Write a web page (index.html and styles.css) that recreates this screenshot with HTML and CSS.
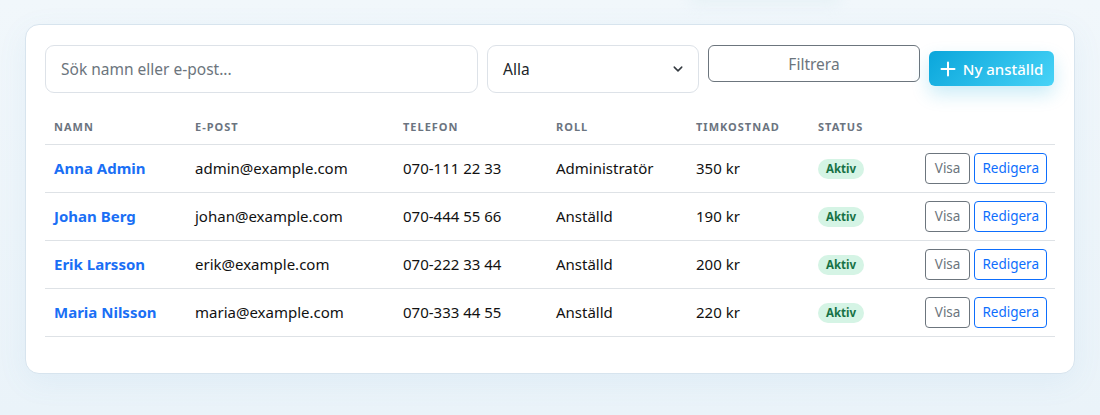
FILE: index.html
```html
<!DOCTYPE html>
<html lang="sv">
<head>
<meta charset="utf-8">
<title>Anställda</title>
<link rel="stylesheet" href="styles.css">
</head>
<body>
<div class="page">
  <div class="glow"></div>
  <section class="card">
    <form class="toolbar">
      <input class="search" type="text" placeholder="Sök namn eller e-post...">
      <div class="select">
        <span>Alla</span>
        <svg class="chev" width="12" height="12" viewBox="0 0 16 16"><path d="M3 5.5l5 5 5-5" fill="none" stroke="#343a40" stroke-width="2" stroke-linecap="round" stroke-linejoin="round"/></svg>
      </div>
      <button type="button" class="btn-filter">Filtrera</button>
      <button type="button" class="btn-new">
        <svg width="16" height="16" viewBox="0 0 16 16"><path d="M8 1.5v13M1.5 8h13" stroke="#fff" stroke-width="2" stroke-linecap="round"/></svg>
        <span>Ny anställd</span>
      </button>
    </form>
    <table class="tbl">
      <colgroup>
        <col class="c1"><col class="c2"><col class="c3"><col class="c4"><col class="c5"><col class="c6"><col>
      </colgroup>
      <thead>
        <tr><th>Namn</th><th>E-post</th><th>Telefon</th><th>Roll</th><th>Timkostnad</th><th>Status</th><th></th></tr>
      </thead>
      <tbody>
        <tr><td><a class="name">Anna Admin</a></td><td>admin@example.com</td><td>070-111 22 33</td><td>Administratör</td><td>350 kr</td><td><span class="badge">Aktiv</span></td><td class="act"><button class="b-visa">Visa</button><button class="b-red">Redigera</button></td></tr>
        <tr><td><a class="name">Johan Berg</a></td><td>johan@example.com</td><td>070-444 55 66</td><td>Anställd</td><td>190 kr</td><td><span class="badge">Aktiv</span></td><td class="act"><button class="b-visa">Visa</button><button class="b-red">Redigera</button></td></tr>
        <tr><td><a class="name">Erik Larsson</a></td><td>erik@example.com</td><td>070-222 33 44</td><td>Anställd</td><td>200 kr</td><td><span class="badge">Aktiv</span></td><td class="act"><button class="b-visa">Visa</button><button class="b-red">Redigera</button></td></tr>
        <tr><td><a class="name">Maria Nilsson</a></td><td>maria@example.com</td><td>070-333 44 55</td><td>Anställd</td><td>220 kr</td><td><span class="badge">Aktiv</span></td><td class="act"><button class="b-visa">Visa</button><button class="b-red">Redigera</button></td></tr>
      </tbody>
    </table>
  </section>
</div>
</body>
</html>
```
FILE: styles.css
```css
* { box-sizing: border-box; }
html, body { margin: 0; padding: 0; }
body {
  font-family: "Noto Sans", "Liberation Sans", sans-serif;
  color: #111;
  background: linear-gradient(180deg, #f1f7fb 0%, #eaf3f9 100%);
  width: 1100px;
  height: 415px;
  overflow: hidden;
}
.page {
  position: relative;
  padding: 24px 25px 0 25px;
}
.glow {
  position: absolute;
  top: -10px;
  left: 690px;
  width: 150px;
  height: 14px;
  border-radius: 10px;
  background: rgba(205, 228, 236, 0.3);
  filter: blur(7px);
}
.card {
  position: relative;
  background: #fff;
  border: 1px solid #d7e4ee;
  border-radius: 14px;
  padding: 20px 19px 36px 19px;
  box-shadow: 0 8px 30px rgba(90, 150, 200, 0.08);
  height: 350px;
}
.toolbar {
  display: grid;
  grid-template-columns: 433px 212px 212px 125px;
  gap: 9px;
  align-items: start;
  margin: 0;
}
.search {
  height: 48px;
  border: 1px solid #dde2e8;
  border-radius: 9px;
  padding: 0 15px;
  font: inherit;
  font-size: 15.5px;
  color: #212529;
  outline: none;
}
.search::placeholder { color: #6c757d; }
.select {
  height: 48px;
  border: 1px solid #dde2e8;
  border-radius: 9px;
  padding: 0 14px 0 15px;
  display: flex;
  align-items: center;
  justify-content: space-between;
  font-size: 15.5px;
  color: #212529;
}
.btn-filter {
  height: 37px;
  border: 1px solid #6c757d;
  border-radius: 6px;
  background: #fff;
  font: inherit;
  font-size: 15.5px;
  color: #6c757d;
}
.btn-new {
  margin-top: 6px;
  height: 35px;
  border: 0;
  border-radius: 6px;
  background: linear-gradient(135deg, #0aa6db 0%, #48d3f7 100%);
  color: #fff;
  font: inherit;
  font-size: 15px;
  font-weight: 500;
  display: flex;
  align-items: center;
  justify-content: center;
  gap: 7px;
  padding: 0 10px;
  box-shadow: 0 8px 18px rgba(20, 170, 220, 0.22);
}
.tbl {
  width: 1010px;
  margin-top: 16px;
  border-collapse: collapse;
  table-layout: fixed;
}
.c1 { width: 141px; }
.c2 { width: 208px; }
.c3 { width: 153px; }
.c4 { width: 140px; }
.c5 { width: 122px; }
.c6 { width: 90px; }
.tbl th {
  text-align: left;
  font-size: 11px;
  font-weight: 700;
  text-transform: uppercase;
  letter-spacing: 1px;
  color: #6b7480;
  height: 35px;
  padding: 0 9px;
  border-bottom: 1px solid #dee2e6;
  vertical-align: middle;
}
.tbl td {
  height: 48px;
  padding: 0 9px;
  border-bottom: 1px solid #dee2e6;
  font-size: 15px;
  color: #111;
  vertical-align: middle;
  white-space: nowrap;
}
.name {
  color: #1a6ff5;
  font-weight: 700;
  text-decoration: none;
}
.badge {
  display: inline-block;
  background: #d5f4e5;
  color: #177245;
  font-size: 11.5px;
  font-weight: 700;
  padding: 3px 8px;
  border-radius: 10px;
  line-height: 14px;
}
.act {
  text-align: right;
  padding-right: 8px !important;
}
.act button {
  font: inherit;
  font-size: 13.5px;
  height: 31px;
  border-radius: 4px;
  background: #fff;
  vertical-align: middle;
}
.b-visa {
  border: 1px solid #6c757d;
  color: #6c757d;
  margin-right: 4px;
  padding: 0 9px;
}
.b-red {
  border: 1px solid #0d6efd;
  color: #0d6efd;
  padding: 0 7px;
}
```
